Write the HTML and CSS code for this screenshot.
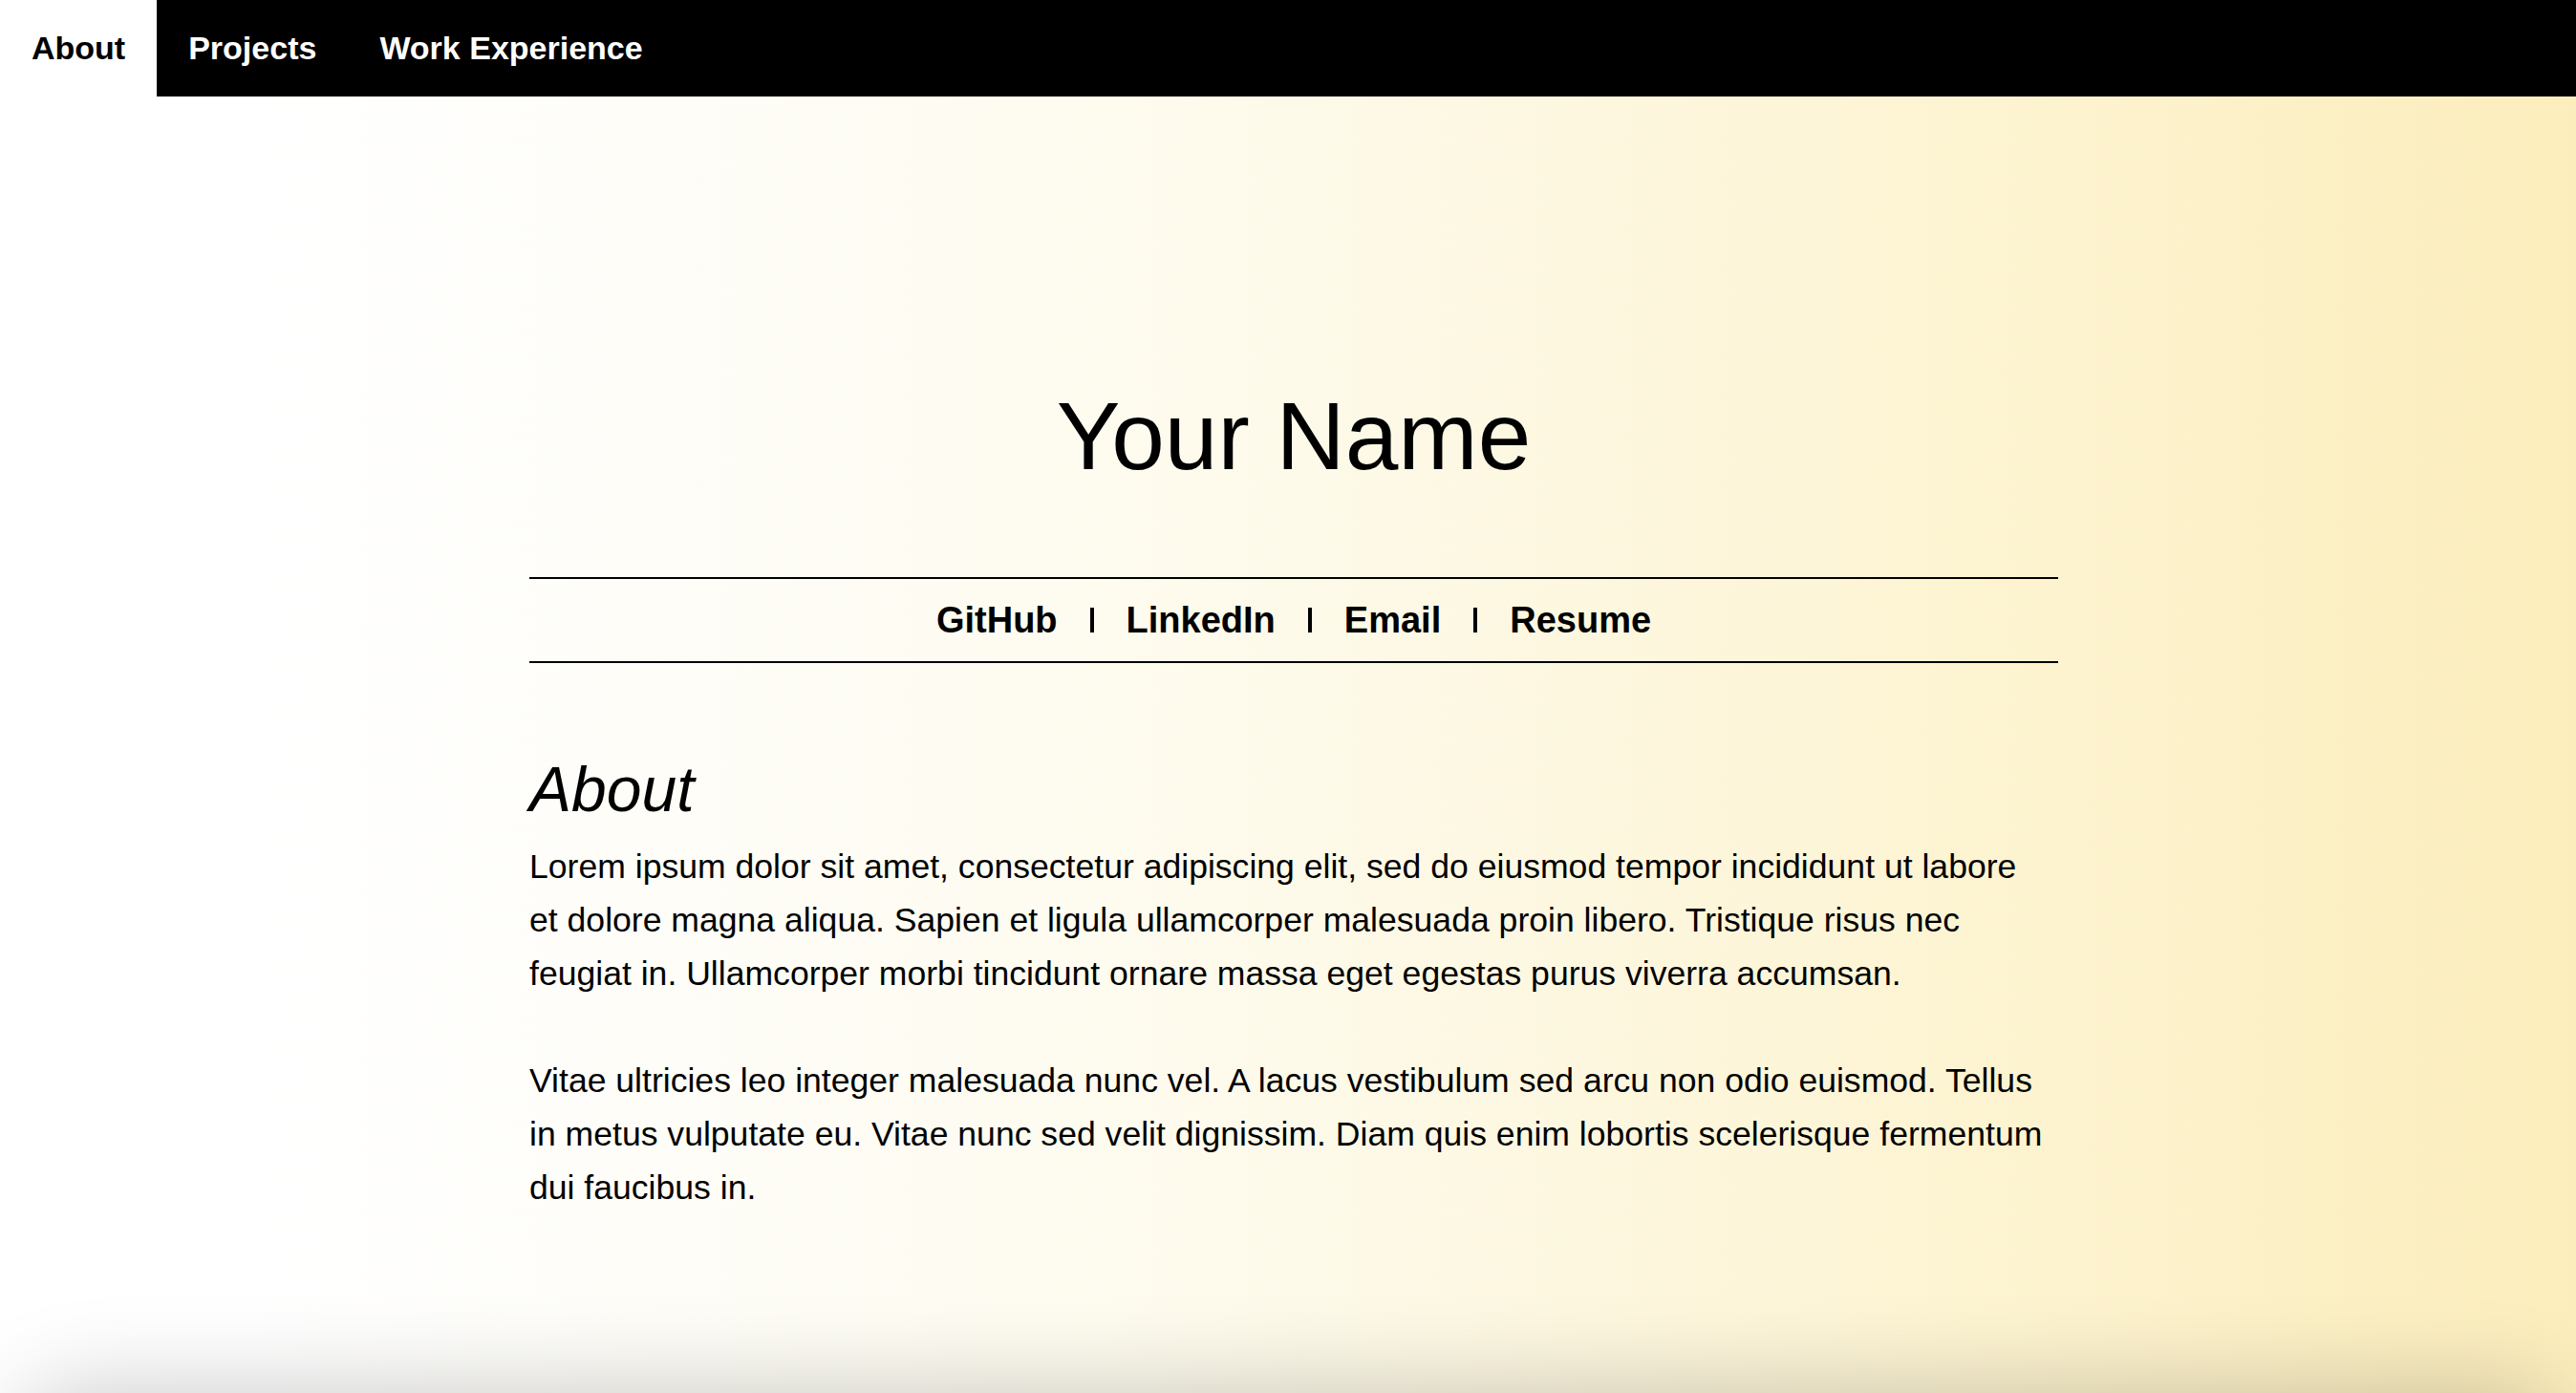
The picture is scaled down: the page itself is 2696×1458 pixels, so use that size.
FILE: index.html
```html
<!DOCTYPE html>
<html lang="en">
<head>
<meta charset="utf-8">
<title>Your Name</title>
<link rel="stylesheet" href="styles.css">
</head>
<body>
<nav class="topnav">
  <a class="tab active" href="#about">About</a>
  <a class="tab" href="#projects">Projects</a>
  <a class="tab" href="#work">Work Experience</a>
</nav>
<div class="page">
  <main class="content">
    <h1 class="name">Your Name</h1>
    <div class="links">
      <a href="#">GitHub</a><span class="sep"></span><a href="#">LinkedIn</a><span class="sep"></span><a href="#">Email</a><span class="sep"></span><a href="#">Resume</a>
    </div>
    <h2 class="section-title">About</h2>
    <p class="para">Lorem ipsum dolor sit amet, consectetur adipiscing elit, sed do eiusmod tempor incididunt ut labore et dolore magna aliqua. Sapien et ligula ullamcorper malesuada proin libero. Tristique risus nec feugiat in. Ullamcorper morbi tincidunt ornare massa eget egestas purus viverra accumsan.</p>
    <p class="para">Vitae ultricies leo integer malesuada nunc vel. A lacus vestibulum sed arcu non odio euismod. Tellus in metus vulputate eu. Vitae nunc sed velit dignissim. Diam quis enim lobortis scelerisque fermentum dui faucibus in.</p>
  </main>
</div>
<div class="bottom-shadow"></div>
</body>
</html>
```

FILE: styles.css
```css
html, body {
  margin: 0;
  padding: 0;
}

body {
  min-height: 100vh;
  overflow: hidden;
  font-family: "Liberation Sans", Arial, Helvetica, sans-serif;
  color: #000;
  background: linear-gradient(to right,
    #ffffff 0%,
    #ffffff 10%,
    #fefdf8 25%,
    #fefbee 45%,
    #fdf7df 62%,
    #fdf4d3 75%,
    #fcf0c5 90%,
    #fcedbc 100%);
}

.topnav {
  display: flex;
  height: 101px;
  background: #000;
}

.tab {
  display: block;
  padding: 0 33px;
  line-height: 101px;
  font-size: 34px;
  font-weight: 700;
  color: #fff;
  text-decoration: none;
}

.tab.active {
  background: #fff;
  color: #000;
}

.page {
  padding-left: 12px;
}

.content {
  width: 1600px;
  margin: 0 auto;
}

.name {
  margin: 305px 0 0;
  font-size: 100px;
  line-height: 100px;
  font-weight: 400;
  text-align: center;
}

.links {
  margin-top: 98px;
  height: 86px;
  border-top: 2px solid #000;
  border-bottom: 2px solid #000;
  text-align: center;
  font-size: 38px;
  line-height: 86px;
  font-weight: 700;
}

.links a {
  color: #000;
  text-decoration: none;
}

.sep {
  display: inline-block;
  width: 4px;
  height: 26px;
  margin: 0 34px;
  background: #000;
}

.section-title {
  margin: 95px 0 16px;
  font-size: 66px;
  line-height: 74px;
  font-style: italic;
  font-weight: 400;
}

.para {
  width: 1595.7px;
  margin: 0 0 56px;
  font-size: 35.6px;
  line-height: 56px;
}

.bottom-shadow {
  position: fixed;
  left: 20px;
  right: 20px;
  top: 100%;
  height: 200px;
  border-radius: 60px;
  box-shadow: 0 0 100px rgba(0, 0, 0, 0.22);
  pointer-events: none;
}
```
